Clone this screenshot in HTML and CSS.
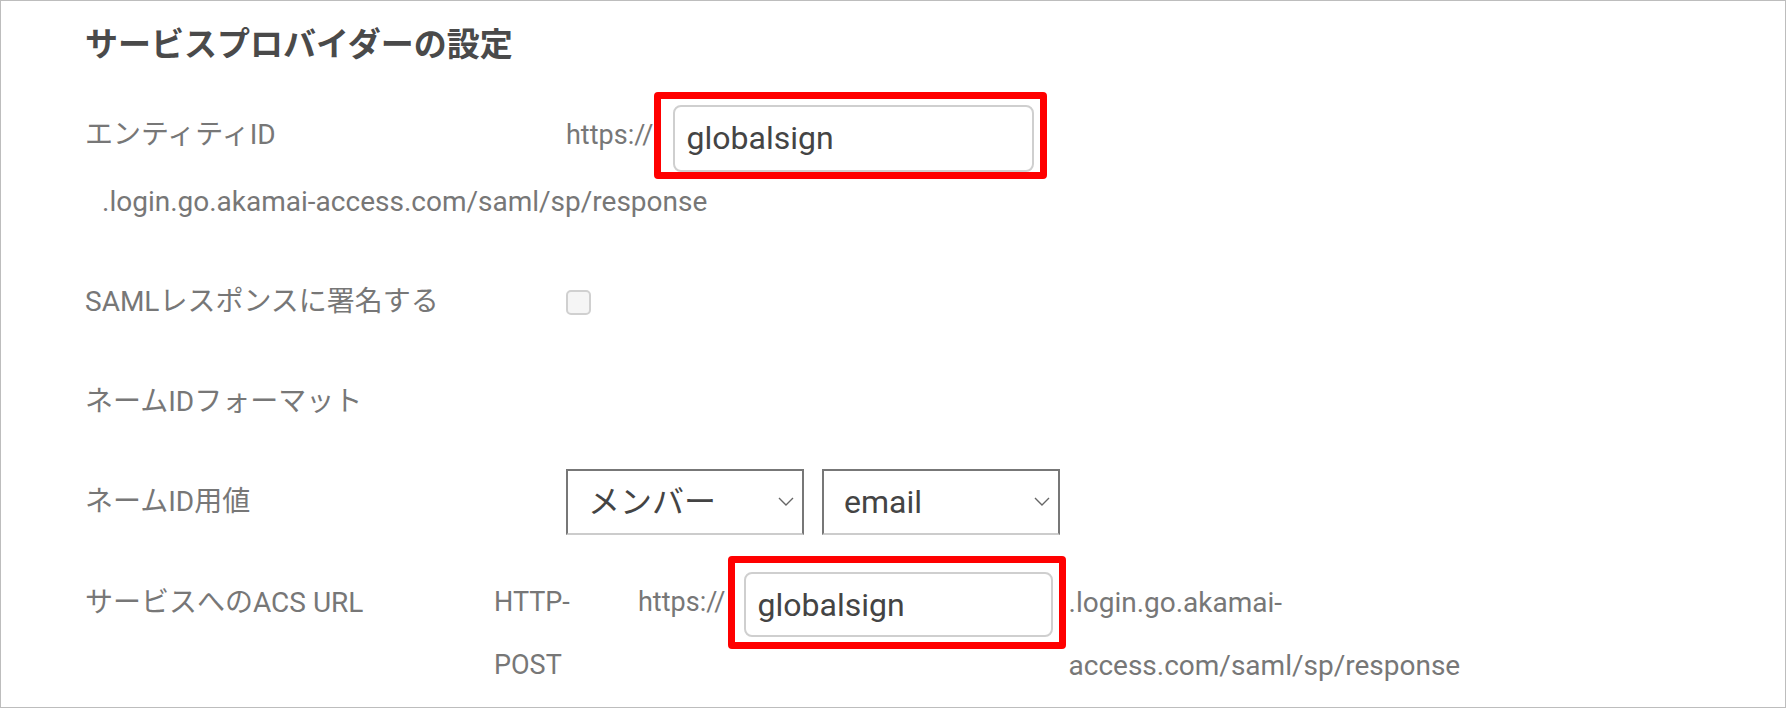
FILE: index.html
```html
<!DOCTYPE html>
<html>
<head>
    <title>サービスプロバイダーの設定</title>
    <meta charset="UTF-8">
    <link rel="stylesheet" href="styles.css">
</head>
<body>
    <div class="panel">
        <h2 class="title">サービスプロバイダーの設定</h2>

        <div class="field field-entity">
            <div class="label">エンティティID</div>
            <div class="value">
                <span class="prefix">https://</span>
                <span class="mark mark-entity">
                    <input class="text-input" type="text" value="globalsign">
                </span>
            </div>
        </div>
        <div class="suffix">.login.go.akamai-access.com/saml/sp/response</div>

        <div class="field field-sign">
            <div class="label">SAMLレスポンスに署名する</div>
            <div class="value">
                <input class="check" type="checkbox">
            </div>
        </div>

        <div class="field">
            <div class="label">ネームIDフォーマット</div>
        </div>

        <div class="field">
            <div class="label">ネームID用値</div>
            <div class="value selects">
                <span class="select-wrap">
                    <select class="select"><option>メンバー</option></select>
                    <svg class="chevron" width="16" height="9" viewBox="0 0 16 9"><path d="M1 1l7 7 7-7" fill="none" stroke="#666" stroke-width="1.4"/></svg>
                </span>
                <span class="select-wrap">
                    <select class="select"><option>email</option></select>
                    <svg class="chevron" width="16" height="9" viewBox="0 0 16 9"><path d="M1 1l7 7 7-7" fill="none" stroke="#666" stroke-width="1.4"/></svg>
                </span>
            </div>
        </div>

        <div class="field-acs">
            <div class="label acs-label">サービスへのACS URL</div>
            <div class="binding">HTTP-POST</div>
            <span class="prefix acs-prefix">https://</span>
            <span class="mark mark-acs">
                <input class="text-input acs-input" type="text" value="globalsign">
            </span>
            <div class="acs-suffix">.login.go.akamai-access.com/saml/sp/response</div>
        </div>
    </div>
</body>
</html>
```

FILE: styles.css
```css
html, body {
    margin: 0;
    padding: 0;
}
body {
    width: 1786px;
    height: 708px;
    box-sizing: border-box;
    border: 1px solid #bdbdbd;
    overflow: hidden;
    background: #fff;
    font-family: Roboto, "Noto Sans CJK JP", sans-serif;
    color: #777;
}
.panel {
    padding-left: 84px;
}
.title {
    margin: 24px 0 0;
    font-size: 33px;
    line-height: 40px;
    font-weight: 700;
    color: #4a4a4a;
}
.field {
    display: flex;
    align-items: center;
    height: 100px;
}
.field-entity {
    margin-top: 26px;
    height: 88px;
}
.field-sign {
    margin-top: 27px;
}
.label {
    width: 481px;
    flex-shrink: 0;
    font-size: 28px;
    line-height: 40px;
}
.value {
    display: flex;
    align-items: center;
}
.prefix {
    font-size: 27px;
    line-height: 40px;
}
.mark {
    display: flex;
    border: 7px solid #ff0000;
    border-radius: 4px;
}
.mark-entity {
    padding: 6px 6px 0 12px;
}
.text-input {
    width: 361px;
    height: 67px;
    box-sizing: border-box;
    border: 2px solid #cfcfcf;
    border-radius: 8px;
    padding: 0 0 0 12px;
    font-family: Roboto, sans-serif;
    font-size: 32px;
    color: #444;
    background: #fff;
    outline: none;
}
.suffix {
    padding-left: 17px;
    font-size: 28px;
    line-height: 46px;
}
.check {
    appearance: none;
    margin: 0;
    width: 25px;
    height: 25px;
    box-sizing: border-box;
    border: 2px solid #d0d0d0;
    border-radius: 5px;
    background: #f5f5f5;
}
.selects {
    gap: 18px;
}
.select-wrap {
    position: relative;
    display: flex;
}
.select {
    appearance: none;
    width: 238px;
    height: 66px;
    box-sizing: border-box;
    border: 2px solid #777;
    border-bottom-color: #ccc;
    border-radius: 0;
    padding: 0 0 0 20px;
    background: #fff;
    font-family: Roboto, "Noto Sans CJK JP", sans-serif;
    font-size: 32px;
    color: #444;
}
.chevron {
    position: absolute;
    right: 10px;
    top: 28px;
    pointer-events: none;
}
.field-acs {
    display: flex;
    align-items: flex-start;
    font-size: 27px;
    line-height: 63px;
}
.acs-label {
    width: 409px;
    padding-top: 19px;
    line-height: 63px;
}
.binding {
    width: 90px;
    margin-right: 54px;
    padding-top: 19px;
}
.acs-prefix {
    padding-top: 19px;
    margin-right: 2px;
    line-height: 63px;
}
.mark-acs {
    margin-top: 4px;
    padding: 9px 6px 5px 9px;
}
.acs-input {
    width: 309px;
    height: 65px;
}
.acs-suffix {
    width: 410px;
    padding-top: 19px;
    margin-left: 3px;
    font-size: 28px;
}
```
